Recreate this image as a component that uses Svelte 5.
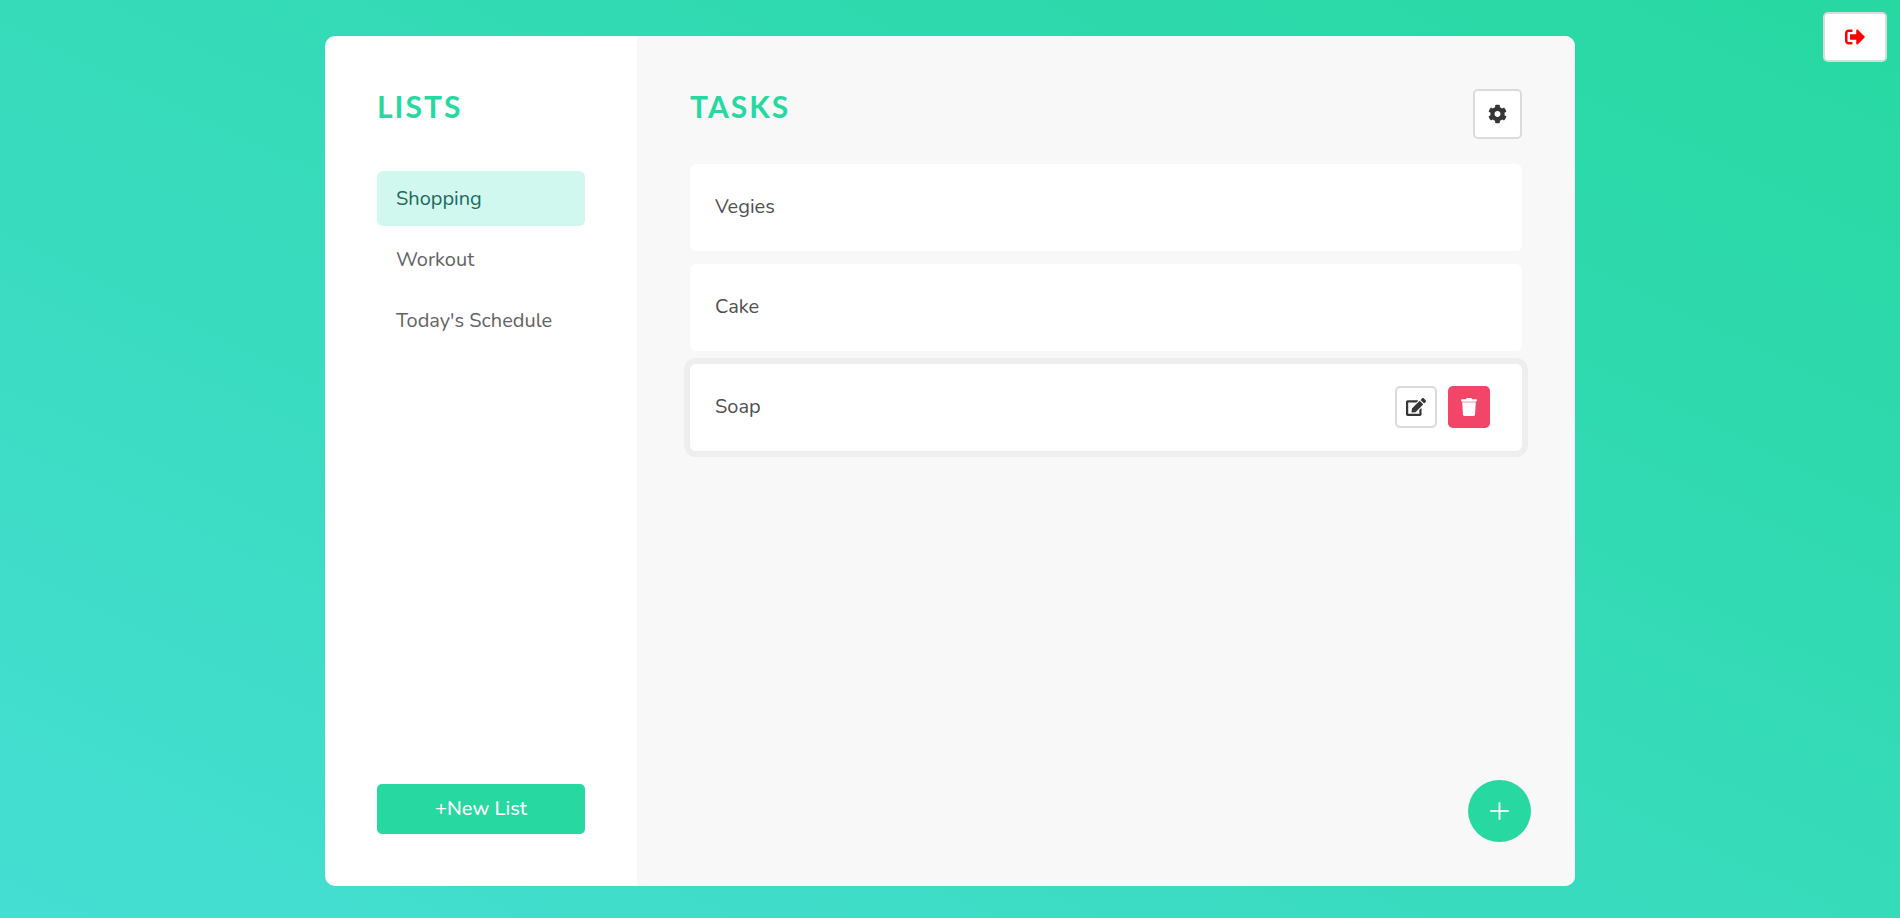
<script>
  let lists = $state(['Shopping', 'Workout', "Today's Schedule"]);
  let tasks = $state(['Vegies', 'Cake', 'Soap']);
  let activeList = $state('Shopping');
  let activeTask = $state('Soap');
</script>

<button class="icon-button logout" aria-label="Log out">
  <svg viewBox="0 0 512 512" width="20" height="20"><path d="M497 273L329 441c-15 15-41 4.500-41-17v-96H152c-13.300 0-24-10.700-24-24v-96c0-13.300 10.700-24 24-24h136V88c0-21.400 25.900-32 41-17l168 168c9.300 9.400 9.300 24.600 0 34zM192 436v-40c0-6.600-5.400-12-12-12H96c-17.700 0-32-14.300-32-32V160c0-17.700 14.300-32 32-32h84c6.600 0 12-5.400 12-12V76c0-6.600-5.400-12-12-12H96c-53 0-96 43-96 96v192c0 53 43 96 96 96h84c6.600 0 12-5.400 12-12z" /></svg>
</button>

<div class="page">
  <main class="board">
    <aside class="sidebar">
      <h1>LISTS</h1>
      <nav class="lists">
        {#each lists as list}
          <a href="#list" class:active={list === activeList} onclick={() => (activeList = list)}>{list}</a>
        {/each}
      </nav>
      <button class="new-list">+New List</button>
    </aside>

    <section class="content">
      <header>
        <h1>TASKS</h1>
        <button class="icon-button settings" aria-label="List settings">
          <svg viewBox="0 0 512 512" width="19" height="20"><path d="M487.400 315.700l-42.600-24.600c4.300-23.200 4.300-47 0-70.200l42.600-24.600c4.900-2.800 7.100-8.600 5.500-14-11.100-35.600-30-67.800-54.700-94.600-3.800-4.100-10-5.100-14.800-2.300L380.800 110c-17.900-15.400-38.500-27.300-60.800-35.100V25.800c0-5.600-3.900-10.500-9.400-11.700-36.700-8.200-74.300-7.800-109.200 0-5.500 1.200-9.400 6.100-9.400 11.700V75c-22.200 7.900-42.800 19.800-60.800 35.100L88.700 85.500c-4.900-2.800-11-1.900-14.800 2.300-24.700 26.700-43.600 58.900-54.700 94.600-1.700 5.400.6 11.200 5.500 14L67.300 221c-4.300 23.200-4.300 47 0 70.200l-42.600 24.600c-4.900 2.800-7.100 8.600-5.500 14 11.100 35.600 30 67.800 54.700 94.600 3.800 4.100 10 5.100 14.800 2.300l42.600-24.600c17.900 15.400 38.500 27.300 60.800 35.100v49.200c0 5.600 3.900 10.500 9.400 11.700 36.700 8.200 74.300 7.800 109.200 0 5.500-1.200 9.400-6.100 9.400-11.700v-49.200c22.200-7.900 42.800-19.800 60.800-35.100l42.600 24.600c4.900 2.800 11 1.900 14.800-2.300 24.700-26.700 43.600-58.900 54.700-94.600 1.500-5.500-.7-11.300-5.600-14.100zM256 336c-44.100 0-80-35.900-80-80s35.900-80 80-80 80 35.900 80 80-35.900 80-80 80z" /></svg>
        </button>
      </header>

      <ul class="tasks">
        {#each tasks as task}
          <li class:active={task === activeTask}>
            <span>{task}</span>
            {#if task === activeTask}
              <div class="actions">
                <button class="icon-button" aria-label="Edit task">
                  <svg viewBox="0 0 576 512" width="20" height="18"><path d="M402.600 83.200l90.200 90.200c3.800 3.800 3.800 10 0 13.800L274.400 405.600l-92.800 10.300c-12.400 1.400-22.900-9.100-21.500-21.500l10.300-92.800L388.800 83.200c3.800-3.800 10-3.800 13.800 0zm162-22.900l-48.800-48.800c-15.200-15.200-39.900-15.200-55.200 0l-35.400 35.400c-3.800 3.800-3.800 10 0 13.800l90.200 90.200c3.800 3.800 10 3.800 13.800 0l35.400-35.400c15.200-15.300 15.200-40 0-55.200zM384 346.200V448H64V128h229.800c3.200 0 6.200-1.300 8.500-3.500l40-40c7.600-7.600 2.200-20.500-8.500-20.500H48C21.500 64 0 85.500 0 112v352c0 26.500 21.500 48 48 48h352c26.500 0 48-21.500 48-48V306.200c0-10.700-12.900-16-20.500-8.500l-40 40c-2.200 2.300-3.500 5.300-3.500 8.500z" /></svg>
                </button>
                <button class="icon-button danger" aria-label="Delete task">
                  <svg viewBox="0 0 448 512" width="16" height="18"><path d="M432 32H312l-9.400-18.700A24 24 0 0 0 281.100 0H166.800a23.700 23.700 0 0 0-21.400 13.300L136 32H16A16 16 0 0 0 0 48v32a16 16 0 0 0 16 16h416a16 16 0 0 0 16-16V48a16 16 0 0 0-16-16z" /><path opacity="0.75" d="M30 96h388v32H30z" /><path d="M32 128h384l-21.200 339a48 48 0 0 1-47.900 45H101.100a48 48 0 0 1-47.900-45z" /></svg>
                </button>
              </div>
            {/if}
          </li>
        {/each}
      </ul>

      <button class="add" aria-label="Add task">
        <svg viewBox="0 0 19 18" width="19" height="18"><path d="M9.500 1v16M1 9h17" /></svg>
      </button>
    </section>
  </main>
</div>

<style>
  :global(body) {
    margin: 0;
    color: #505050;
    font: 400 20px/30px Nunito, "Open Sans", sans-serif;
  }

  * {
    box-sizing: border-box;
  }

  .page {
    display: flex;
    justify-content: center;
    min-height: 100vh;
    padding: 36px 32px 32px;
    background: linear-gradient(to top right, #45ded3, #27d8a1);
  }

  .board {
    display: flex;
    width: 100%;
    max-width: 1250px;
    overflow: hidden;
    border-radius: 10px;
    background: #fff;
  }

  .sidebar {
    display: flex;
    flex: 0 0 312px;
    flex-direction: column;
    padding: 52px;
  }

  h1 {
    margin: 0;
    color: #27d8a1;
    font: 700 30px/36px Lato, sans-serif;
    letter-spacing: 2px;
  }

  .lists {
    display: flex;
    flex: 1;
    flex-direction: column;
    gap: 6px;
    margin-top: 47px;
  }

  .lists a {
    padding: 13px 19px 12px;
    border-radius: 6px;
    color: #636363;
    text-decoration: none;
    white-space: nowrap;
  }

  .lists a.active {
    background: #d0f8ee;
    color: #24695a;
  }

  button {
    padding: 0;
    border: 0;
    font: inherit;
    cursor: pointer;
  }

  .new-list {
    height: 50px;
    border-radius: 5px;
    background: #27d8a1;
    color: #fff;
    font-weight: 500;
  }

  .content {
    position: relative;
    flex: 1;
    padding: 52px 53px;
    background: #f8f8f8;
  }

  header {
    display: flex;
    align-items: flex-start;
    justify-content: space-between;
    height: 51px;
  }

  .icon-button {
    display: flex;
    align-items: center;
    justify-content: center;
    width: 42px;
    height: 42px;
    border: 2px solid #dbdbdb;
    border-radius: 5px;
    background: #fff;
    fill: #363636;
  }

  .icon-button.settings {
    align-self: flex-end;
    width: 49px;
    height: 50px;
  }

  .icon-button.danger {
    border: 0;
    background: #f14668;
    fill: #fff;
  }

  .icon-button.logout {
    position: absolute;
    top: 12px;
    right: 13px;
    width: 64px;
    height: 50px;
    fill: #f00;
  }

  .tasks {
    display: flex;
    flex-direction: column;
    gap: 13px;
    margin: 25px 0 0;
    padding: 0;
    list-style: none;
  }

  .tasks li {
    display: flex;
    align-items: center;
    justify-content: space-between;
    height: 87px;
    padding: 0 32px 2px 25px;
    border-radius: 6px;
    background: #fff;
  }

  .tasks li.active {
    box-shadow: 0 0 0 6px #eee;
  }

  .actions {
    display: flex;
    gap: 11px;
  }

  .add {
    position: absolute;
    right: 44px;
    bottom: 44px;
    display: flex;
    align-items: center;
    justify-content: center;
    width: 63px;
    height: 62px;
    border-radius: 50%;
    background: #27d8a1;
  }

  .add svg {
    fill: none;
    stroke: #e4faf3;
    stroke-width: 2;
    stroke-linecap: round;
  }
</style>
